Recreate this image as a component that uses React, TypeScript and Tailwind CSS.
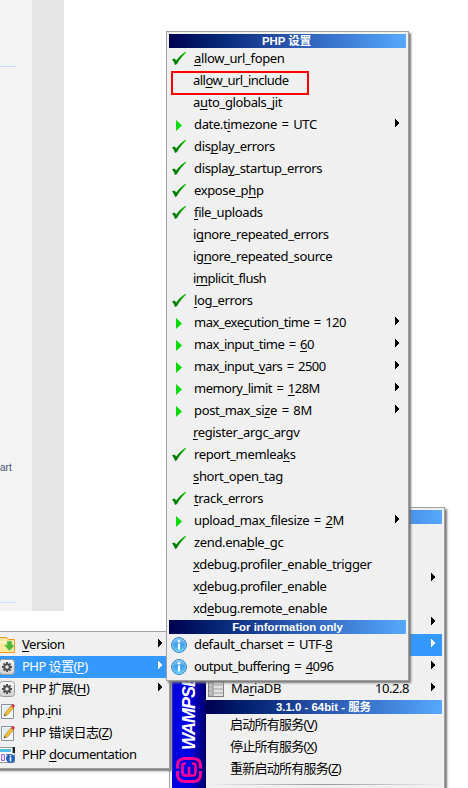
import React from "react";

const latin = "font-['Noto_Sans','Noto_Sans_CJK_SC',sans-serif]";

function Label({ text }: { text: string }) {
  const i = text.indexOf("&");
  if (i < 0) return <>{text}</>;
  return (
    <>
      {text.slice(0, i)}
      <span className="underline decoration-1 underline-offset-2 [text-decoration-skip-ink:none]">{text[i + 1]}</span>
      {text.slice(i + 2)}
    </>
  );
}

function Arrow({ light }: { light?: boolean }) {
  return (
    <svg className="mt-[5px] shrink-0" width="4" height="8" viewBox="0 0 4 8" shapeRendering="crispEdges">
      <path d="M0 0L4 4L0 8Z" fill={light ? "#fff" : "#000"} />
    </svg>
  );
}

function Check() {
  return (
    <svg width="14" height="13" viewBox="0 0 14 13">
      <defs>
        <linearGradient id="ck" x1="0" y1="1" x2="1" y2="0">
          <stop offset="0" stopColor="#007000" />
          <stop offset=".5" stopColor="#008c00" />
          <stop offset="1" stopColor="#00c800" />
        </linearGradient>
      </defs>
      <path d="M0 7.200L2.600 6.500L4.200 8.500C6.600 5.200 9.800 2 13.200 0H14V.8C10.500 4 7.400 7.600 5 12L3 13C2.400 11 1.500 9 0 7.200Z" fill="url(#ck)" />
    </svg>
  );
}

function Play() {
  return (
    <svg className="mt-[2px] ml-1" width="6" height="11" viewBox="0 0 6 11">
      <path d="M0 0L6 5.500L0 11Z" fill="#00dc00" />
    </svg>
  );
}

function Info() {
  return (
    <svg className="-mt-[1px] -ml-[1px]" width="16" height="16" viewBox="0 0 16 16">
      <defs>
        <linearGradient id="inf" x1="0" y1="0" x2="0" y2="1">
          <stop offset="0" stopColor="#8fd0fa" />
          <stop offset=".45" stopColor="#3f9fe8" />
          <stop offset="1" stopColor="#67d4ff" />
        </linearGradient>
      </defs>
      <circle cx="8" cy="8" r="7.400" fill="url(#inf)" stroke="#2377bd" />
      <circle cx="8" cy="8" r="6.500" fill="none" stroke="#a7dcfb" strokeWidth=".6" />
      <circle cx="8" cy="4.300" r="1.200" fill="#fff" />
      <rect x="7" y="6.500" width="2" height="6" fill="#fff" />
    </svg>
  );
}

function Header({ text, className = "" }: { text: string; className?: string }) {
  return (
    <div className={`flex h-3.5 shrink-0 items-center bg-linear-to-r from-[#000050] via-[#2a55ae] to-[#56a9ff] font-['Liberation_Sans','Noto_Sans_CJK_SC',sans-serif] text-[11.4px] leading-[14px] font-bold whitespace-pre text-white ${className}`}>
      {text}
    </div>
  );
}

type Kind = "check" | "play" | "none" | "info";
type Item = [Kind, string, "tight"?];

const settings: Item[] = [
  ["check", "&allow_url_fopen"],
  ["none", "all&ow_url_include", "tight"],
  ["none", "a&uto_globals_jit"],
  ["play", "date.t&imezone = UTC"],
  ["check", "dis&play_errors"],
  ["check", "displa&y_startup_errors"],
  ["check", "expose_p&hp"],
  ["check", "&file_uploads"],
  ["none", "i&gnore_repeated_errors"],
  ["none", "ig&nore_repeated_source"],
  ["none", "i&mplicit_flush", "tight"],
  ["check", "&log_errors"],
  ["play", "max_exe&cution_time = 120", "tight"],
  ["play", "max_input_time = &60", "tight"],
  ["play", "max_input_&vars = 2500", "tight"],
  ["play", "memory_limit = &128M", "tight"],
  ["play", "post_max_si&ze = 8M"],
  ["none", "&register_argc_argv"],
  ["check", "report_memlea&ks"],
  ["none", "&short_open_tag"],
  ["check", "&track_errors"],
  ["play", "upload_max_filesize = &2M"],
  ["check", "zend.ena&ble_gc"],
  ["none", "&xdebug.profiler_enable_trigger"],
  ["none", "x&debug.profiler_enable"],
  ["none", "xd&ebug.remote_enable"],
];

const infos: Item[] = [
  ["info", "default_charset = UTF-&8"],
  ["info", "output_buffering = &4096", "tight"],
];

function SettingRow({ item }: { item: Item }) {
  const [kind, text, tight] = item;
  return (
    <div className="flex h-[22px] items-start pr-[7px]">
      <span className={`flex shrink-0 pt-1 pl-[3px] ${kind === "none" ? "w-6" : "w-[25px]"}`}>
        {kind === "check" && <Check />}
        {kind === "play" && <Play />}
        {kind === "info" && <Info />}
      </span>
      <span className={`flex-1 text-[13px] leading-[20px] whitespace-pre [word-spacing:1.6px] ${tight ? "tracking-[-0.52px]" : "tracking-[-0.36px]"}`}>
        <Label text={text} />
      </span>
      {kind === "play" && <Arrow />}
    </div>
  );
}

function Folder() {
  return (
    <svg width="16" height="18" viewBox="0 0 16 18">
      <path d="M-2 1.500H6.500L8.500 3.500H14.500V16.500H-2Z" fill="#ffe89a" stroke="#f0981c" />
      <path d="M0 6H14" stroke="#fff6cc" strokeWidth="2" />
      <path d="M7 5H12V9H15L9.500 15L4 9H7Z" fill="#4fb535" stroke="#a5dd8d" strokeWidth=".7" />
    </svg>
  );
}

function Gear() {
  return (
    <svg width="16" height="18" viewBox="0 0 16 18">
      <defs>
        <linearGradient id="gr" x1="0" y1="0" x2="0" y2="1">
          <stop offset="0" stopColor="#fafafa" />
          <stop offset="1" stopColor="#cfcfcf" />
        </linearGradient>
      </defs>
      <rect x="-.5" y="1.500" width="15" height="15" rx="3" fill="url(#gr)" stroke="#9c9c9c" />
      <g stroke="#4d4d4d" strokeWidth="1.900">
        <path d="M7 4V14M2 9H12M3.500 5.500L10.500 12.500M10.500 5.500L3.500 12.500" />
      </g>
      <circle cx="7" cy="9" r="3.500" fill="#4d4d4d" />
      <circle cx="7" cy="9" r="1.800" fill="#e8e8e8" />
    </svg>
  );
}

function Note() {
  return (
    <svg width="16" height="18" viewBox="0 0 16 18">
      <path d="M1.500 2.500H13.500V16.500H1.500Z" fill="#f6fafd" stroke="#87919c" />
      <path d="M3 5H11M3 7H10M3 9H8M3 11H7" stroke="#cddbe8" />
      <path d="M4 14L5 11L11 4L13.500 6L7.500 13Z" fill="#f5bd35" stroke="#b28125" strokeWidth=".6" />
      <path d="M11 4L12.500 2L15 3.500L13.500 6Z" fill="#d33340" />
      <path d="M4 14L4.700 12L6 13.200Z" fill="#333" />
    </svg>
  );
}

function Doc() {
  return (
    <svg width="16" height="18" viewBox="0 0 16 18">
      <path d="M-1 1.500H14.500V16.500H-1Z" fill="#fff" stroke="#8e9cae" />
      <path d="M0 3H11V6H0Z" fill="#52bde8" />
      <path d="M12.500 1H15V7H12.500Z" fill="#222" />
      <path d="M1.500 8.500H4.500V14.500H1.500Z" fill="#eadcff" stroke="#9a69df" />
      <path d="M6 8.500H9" stroke="#9a69df" />
      <circle cx="10.500" cy="12.500" r="4.500" fill="#2662bd" />
      <path d="M10.500 9V10.300M10.500 11V15.500" stroke="#fff" strokeWidth="1.500" />
    </svg>
  );
}

const phpMenu: { icon: React.ReactNode; text: string; arrow?: boolean; active?: boolean; cjk?: boolean }[] = [
  { icon: <Folder />, text: "&Version", arrow: true },
  { icon: <Gear />, text: "PHP 设置(&P)", arrow: true, active: true, cjk: true },
  { icon: <Gear />, text: "PHP 扩展(&H)", arrow: true, cjk: true },
  { icon: <Note />, text: "php.&ini" },
  { icon: <Note />, text: "PHP 错误日志(&Z)", cjk: true },
  { icon: <Doc />, text: "PHP &documentation" },
];

const shell = "border border-[#a0a0a0] bg-[#f0f0f0] p-0.5 shadow-[2px_2px_2px_#777]";

function ServerRow({ arrow, active, children }: { arrow?: boolean; active?: boolean; children?: React.ReactNode }) {
  return (
    <div className={`flex h-[22px] items-start pr-[7px] pl-0.5 text-[13px] leading-[20px] tracking-[-0.45px] ${active ? "bg-[#3399ff] text-white" : ""}`}>
      <div className="flex flex-1">{children}</div>
      {arrow && <Arrow light={active} />}
    </div>
  );
}

export default function App() {
  return (
    <div className={`relative h-[788px] w-[468px] overflow-hidden bg-white text-black ${latin}`}>
      <div className="flex h-[611px] w-16">
        <div className="flex w-8 flex-col bg-[#f3f3f3]">
          <div className="mt-[66px] h-px w-4 bg-[#c6d8ff]" />
          <div className="mt-[394px] font-['Liberation_Sans',sans-serif] text-[10px] leading-[14px] text-[#454d70]">art</div>
          <div className="mt-[127px] h-px w-4 bg-[#cce0ff]" />
        </div>
        <div className="w-8 bg-[#e6e6e6]" />
      </div>

      <div className={`absolute top-[507px] left-[169px] h-[300px] w-[276px] ${shell}`}>
        <div className="flex h-full">
          <div className="flex w-[34px] shrink-0 flex-col items-center bg-linear-to-r from-[#0000e0] via-[#0000e8] to-[#00006c]">
            <div className="flex h-[240px] items-start [writing-mode:vertical-rl]">
              <span className="flex h-[240px] w-[34px] rotate-180 items-center justify-start font-['Liberation_Sans',sans-serif] text-[18px] leading-[34px] font-bold tracking-[-1px] text-white italic">
                WAMPSERVER
              </span>
            </div>
            <svg className="mt-[7px]" width="26" height="26" viewBox="0 0 26 26" fill="none" stroke="#ff0096" strokeWidth="3">
              <path d="M1.500 11.500V9Q1.500 1.500 9 1.500H17Q24.500 1.500 24.500 9V11.500" />
              <path d="M1.500 14V17Q1.500 24.500 9 24.500H17Q24.500 24.500 24.500 17V14" />
              <path d="M10 6.500H8.500Q6.500 6.500 6.500 8.500V15.500Q6.500 18.500 9.500 18.500H16.500Q19.500 18.500 19.500 15.500V8.500Q19.500 6.500 17.500 6.500H16M13 10V18" strokeWidth="2.600" />
            </svg>
          </div>
          <div className="flex min-w-0 flex-1 flex-col">
            <Header text="" />
            <ServerRow />
            <ServerRow />
            <ServerRow arrow />
            <ServerRow />
            <ServerRow arrow />
            <ServerRow arrow active />
            <ServerRow arrow />
            <ServerRow arrow>
              <svg className="mt-[3px]" width="16" height="16" viewBox="0 0 16 16">
                <rect x=".5" y=".5" width="15" height="15" fill="#eee" stroke="#808080" />
                <path d="M1 2H5M1 6H5M1 10H5M1 14H5" stroke="#b5b5b5" strokeWidth="2" />
                <path d="M5 2H15M5 6H15M5 10H15M5 14H15" stroke="#e2e2e2" strokeWidth="2" />
                <path d="M0 4H16M0 8H16M0 12H16M5 1V15" stroke="#949494" />
              </svg>
              <span className="ml-[7px] flex-1"><Label text="Ma&riaDB" /></span>
              <span className="mr-[22px]">10.2.8</span>
            </ServerRow>
            <Header text="3.1.0 - 64bit - 服务" className="pl-[70px]" />
            <div className="flex flex-col pl-[24px] text-[13px] leading-[20px] tracking-[-0.75px]">
              <span className="h-[22px]"><Label text="启动所有服务(&V)" /></span>
              <span className="h-[22px]"><Label text="停止所有服务(&X)" /></span>
              <span className="h-[22px]"><Label text="重新启动所有服务(&Z)" /></span>
            </div>
            <div className="mt-1 h-px bg-linear-to-r from-[#f0f0f0] via-[#999] to-[#f0f0f0]" />
          </div>
        </div>
      </div>

      <div className={`absolute top-[631px] -left-[6px] w-[176px] ${shell}`}>
        {phpMenu.map((m) => (
          <div key={m.text} className={`flex h-[22px] items-start pr-[5px] pl-[3px] ${m.active ? "bg-[#3399ff] text-white" : ""}`}>
            <span className="mt-0.5 w-[22px] shrink-0">{m.icon}</span>
            <span className={`flex-1 text-[13px] leading-[20px] whitespace-pre ${m.cjk ? "tracking-[-0.55px]" : "tracking-[-0.46px]"}`}><Label text={m.text} /></span>
            {m.arrow && <Arrow light={m.active} />}
          </div>
        ))}
      </div>

      <div className={`absolute top-[31px] left-[166px] w-[243px] ${shell}`}>
        <Header text="PHP 设置" className="justify-center pr-0.5" />
        {settings.map((s) => <SettingRow key={s[1]} item={s} />)}
        <Header text="For information only" className="justify-center" />
        {infos.map((s) => <SettingRow key={s[1]} item={s} />)}
      </div>
      <div className="absolute top-[71px] left-[171px] h-6 w-[138px] border-2 border-[#ff0000]" />
    </div>
  );
}
